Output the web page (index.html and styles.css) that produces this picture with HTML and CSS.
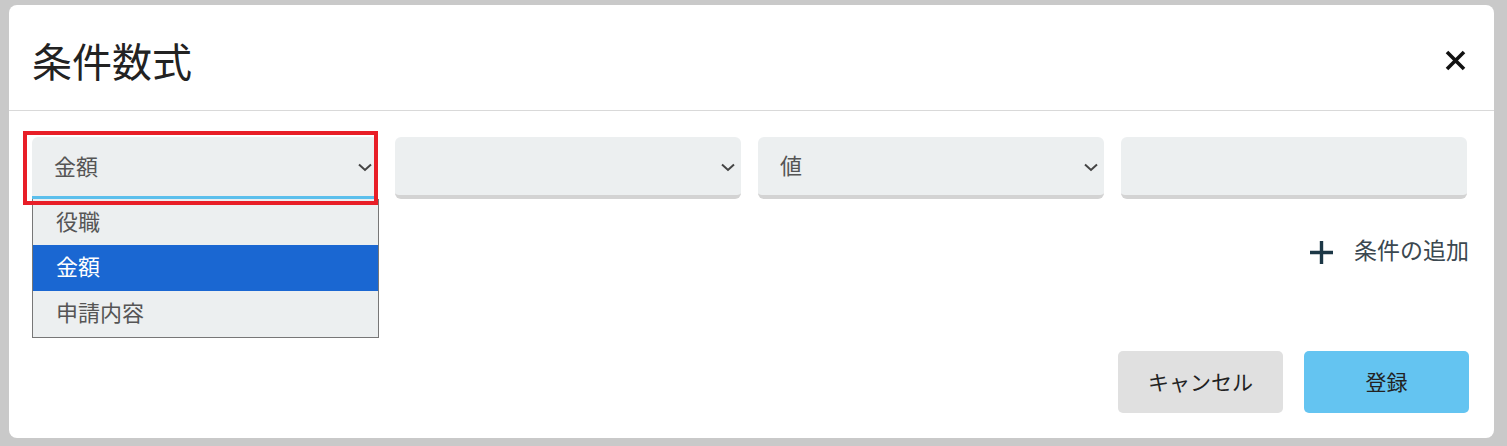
FILE: index.html
```html
<!DOCTYPE html>
<html lang="ja">
<head>
    <meta charset="UTF-8">
    <title>条件数式</title>
    <link rel="stylesheet" href="styles.css">
</head>
<body>
    <div class="modal">
        <header class="modal-head">
            <h1>条件数式</h1>
            <button class="close" aria-label="閉じる">
                <svg width="21" height="21" viewBox="0 0 21 21"><path d="M2 2 L19 19 M19 2 L2 19" stroke="#111" stroke-width="3.6" fill="none"/></svg>
            </button>
        </header>
        <main class="modal-body">
            <div class="conditions">
                <div class="field select active">
                    <span class="value">金額</span>
                    <svg class="chev" width="14" height="9" viewBox="0 0 14 9"><path d="M1 1.5 L7 7 L13 1.5" stroke="#444" stroke-width="2" fill="none"/></svg>
                    <ul class="options">
                        <li>役職</li>
                        <li class="selected">金額</li>
                        <li>申請内容</li>
                    </ul>
                    <div class="highlight"></div>
                </div>
                <div class="field select">
                    <span class="value"></span>
                    <svg class="chev" width="14" height="9" viewBox="0 0 14 9"><path d="M1 1.5 L7 7 L13 1.5" stroke="#444" stroke-width="2" fill="none"/></svg>
                </div>
                <div class="field select">
                    <span class="value">値</span>
                    <svg class="chev" width="14" height="9" viewBox="0 0 14 9"><path d="M1 1.5 L7 7 L13 1.5" stroke="#444" stroke-width="2" fill="none"/></svg>
                </div>
                <div class="field"></div>
            </div>
            <div class="add-row">
                <a class="add" href="#">
                    <svg width="25" height="25" viewBox="0 0 25 25"><path d="M12.5 1 V24 M1 12.5 H24" stroke="#1c3746" stroke-width="3.4" fill="none"/></svg>
                    <span>条件の追加</span>
                </a>
            </div>
            <div class="actions">
                <button class="btn cancel">キャンセル</button>
                <button class="btn submit">登録</button>
            </div>
        </main>
    </div>
</body>
</html>
```

FILE: styles.css
```css
body {
    margin: 0;
    background-color: #c9c9c9;
    font-family: "Noto Sans CJK JP", "Noto Sans", sans-serif;
    color: #333;
    height: 446px;
    overflow: hidden;
}
.modal {
    margin: 5px 0 0 9px;
    width: 1485px;
    height: 433px;
    background-color: #fff;
    border-radius: 8px;
    display: flex;
    flex-direction: column;
    box-sizing: border-box;
}
.modal-head {
    height: 106px;
    box-sizing: border-box;
    border-bottom: 1px solid #d9d9d9;
    display: flex;
    align-items: center;
    justify-content: space-between;
    padding: 0 28px 0 23px;
}
.modal-head h1 {
    margin: 0;
    font-size: 40px;
    font-weight: 400;
    color: #222;
    position: relative;
    top: 2px;
}
.close {
    background: none;
    border: 0;
    padding: 0;
    display: flex;
    position: relative;
    top: 3px;
}
.modal-body {
    padding: 26px 25px 25px 23px;
    flex: 1;
    display: flex;
    flex-direction: column;
}
.conditions {
    display: grid;
    grid-template-columns: repeat(4, 346px);
    gap: 17px;
}
.field {
    position: relative;
    height: 62px;
    box-sizing: border-box;
    background-color: #eceff0;
    border-radius: 6px;
    border-bottom: 4px solid #d3d3d3;
    display: flex;
    align-items: center;
    padding: 0 5px 4px 22px;
}
.field.active {
    border-bottom: 3px solid #5bbfec;
    border-radius: 6px 6px 0 0;
}
.value {
    flex: 1;
    font-size: 22px;
    color: #555;
}
.chev {
    margin-top: 6px;
    margin-right: 1px;
}
.options {
    position: absolute;
    left: 0;
    top: 62px;
    width: 347px;
    box-sizing: border-box;
    margin: 0;
    padding: 0;
    list-style: none;
    border: 1px solid #777;
    border-top: 0;
    background-color: #eceff0;
    z-index: 2;
}
.options li {
    height: 46px;
    line-height: 40px;
    padding-left: 23px;
    font-size: 22px;
    color: #555;
}
.options li:first-child {
    line-height: 42px;
}
.options li.selected {
    background-color: #1a67d2;
    color: #fff;
}
.highlight {
    position: absolute;
    left: -9px;
    top: -6px;
    width: 347px;
    height: 66px;
    border: 4px solid #e81e27;
    z-index: 3;
}
.add-row {
    display: flex;
    justify-content: flex-end;
    margin-top: 33px;
}
.add {
    display: flex;
    align-items: center;
    gap: 20px;
    text-decoration: none;
    color: #3b4850;
    font-size: 23px;
}
.add svg {
    position: relative;
    top: 3px;
}
.actions {
    margin-top: auto;
    display: flex;
    justify-content: flex-end;
    gap: 21px;
}
.btn {
    width: 165px;
    height: 62px;
    border: 0;
    border-radius: 5px;
    font-family: inherit;
    font-size: 21px;
    color: #222;
    padding-bottom: 4px;
}
.cancel {
    background-color: #e0e0e0;
}
.submit {
    background-color: #64c4f1;
}
```
